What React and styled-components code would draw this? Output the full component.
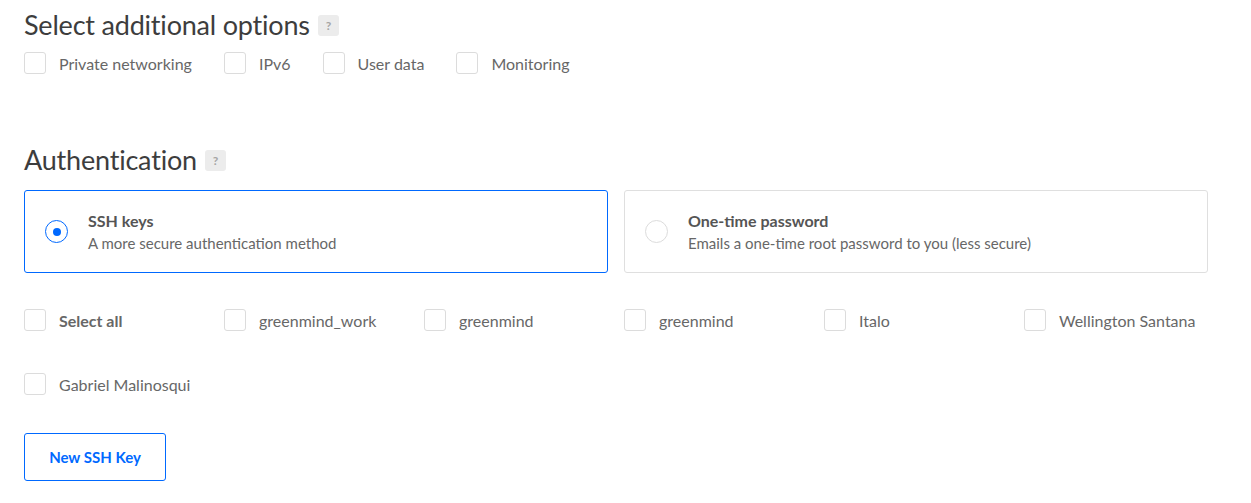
import styled, { createGlobalStyle } from "styled-components";

const GlobalStyle = createGlobalStyle`
  body {
    margin: 0;
    background: #fff;
    font-family: "Lato", "Liberation Sans", sans-serif;
    color: #676767;
  }
`;

const Page = styled.main`
  width: 1184px;
  padding: 0 24px;
`;

const Section = styled.section`
  margin-bottom: ${(p) => p.$gap || 0}px;
`;

const Heading = styled.h2`
  display: flex;
  align-items: center;
  gap: 8px;
  margin: 0;
  height: 49px;
  font-size: 27px;
  font-weight: 400;
  color: #3d3d3d;
  letter-spacing: -0.2px;
`;

const Help = styled.span`
  display: inline-flex;
  align-items: center;
  justify-content: center;
  width: 21px;
  height: 21px;
  margin-top: 2px;
  border-radius: 3px;
  background: #ececec;
  color: #a5a5a5;
  font-size: 12px;
  font-weight: 700;
`;

const OptionRow = styled.div`
  display: flex;
  gap: 32px;
  margin-top: 3px;
`;

const Check = styled.label`
  display: flex;
  align-items: center;
  gap: 13px;
  height: 22px;
  font-size: 16px;
  color: #676767;
  font-weight: ${(p) => (p.$bold ? 700 : 400)};
  white-space: nowrap;
`;

const Box = styled.span`
  box-sizing: border-box;
  width: 22px;
  height: 22px;
  border: 1px solid #dcdcdc;
  border-radius: 3px;
  flex-shrink: 0;
`;

const Cards = styled.div`
  display: grid;
  grid-template-columns: 1fr 1fr;
  gap: 16px;
  margin-top: 6px;
`;

const Card = styled.div`
  box-sizing: border-box;
  height: 83px;
  display: flex;
  align-items: center;
  gap: 20px;
  padding: 0 20px;
  border: 1px solid ${(p) => (p.$active ? "#0069ff" : "#dfdfdf")};
  border-radius: 3px;
`;

const Radio = styled.span`
  box-sizing: border-box;
  width: 23px;
  height: 23px;
  border-radius: 50%;
  border: 1px solid ${(p) => (p.$on ? "#0069ff" : "#dcdcdc")};
  display: flex;
  align-items: center;
  justify-content: center;
  flex-shrink: 0;
  &::after {
    content: "";
    display: ${(p) => (p.$on ? "block" : "none")};
    width: 8px;
    height: 8px;
    border-radius: 50%;
    background: #0069ff;
  }
`;

const CardText = styled.div`
  display: flex;
  flex-direction: column;
  gap: 4px;
`;

const CardTitle = styled.div`
  font-size: 16px;
  font-weight: 700;
  color: #555;
`;

const CardSub = styled.div`
  font-size: 15px;
  color: #676767;
`;

const KeyGrid = styled.div`
  display: grid;
  grid-template-columns: repeat(6, 200px);
  grid-auto-rows: 22px;
  row-gap: 42px;
  margin-top: 36px;
`;

const Button = styled.button`
  margin-top: 38px;
  width: 142px;
  height: 48px;
  background: #fff;
  border: 1px solid #0069ff;
  border-radius: 3px;
  color: #0069ff;
  font-family: inherit;
  font-size: 15px;
  font-weight: 700;
`;

const options = ["Private networking", "IPv6", "User data", "Monitoring"];
const keys = [
  "greenmind_work",
  "greenmind",
  "greenmind",
  "Italo",
  "Wellington Santana",
  "Gabriel Malinosqui",
];

export default function App() {
  return (
    <>
      <GlobalStyle />
      <Page>
        <Section $gap={61}>
          <Heading>
            Select additional options <Help>?</Help>
          </Heading>
          <OptionRow>
            {options.map((o) => (
              <Check key={o}>
                <Box />
                {o}
              </Check>
            ))}
          </OptionRow>
        </Section>
        <Section>
          <Heading>
            Authentication <Help>?</Help>
          </Heading>
          <Cards>
            <Card $active>
              <Radio $on />
              <CardText>
                <CardTitle>SSH keys</CardTitle>
                <CardSub>A more secure authentication method</CardSub>
              </CardText>
            </Card>
            <Card>
              <Radio />
              <CardText>
                <CardTitle>One-time password</CardTitle>
                <CardSub>Emails a one-time root password to you (less secure)</CardSub>
              </CardText>
            </Card>
          </Cards>
          <KeyGrid>
            <Check $bold>
              <Box />
              Select all
            </Check>
            {keys.map((k, i) => (
              <Check key={i}>
                <Box />
                {k}
              </Check>
            ))}
          </KeyGrid>
          <Button>New SSH Key</Button>
        </Section>
      </Page>
    </>
  );
}
